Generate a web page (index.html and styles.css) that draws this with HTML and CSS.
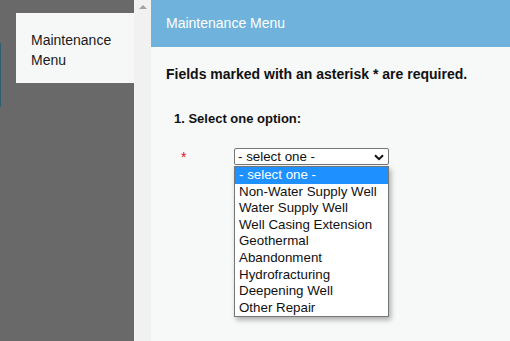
FILE: index.html
```html
<!DOCTYPE html>
<html lang="en">
<head>
    <meta charset="UTF-8">
    <title>Maintenance Menu</title>
    <link rel="stylesheet" href="styles.css">
</head>
<body>
    <div class="page">
        <!-- Left navigation -->
        <div class="sidebar">
            <span class="nav-marker"></span>
            <div class="menu-box">Maintenance<br>Menu</div>
        </div>

        <!-- Scroll strip -->
        <div class="scroll-strip">
            <span class="scroll-up"></span>
        </div>

        <!-- Main panel -->
        <div class="main">
            <div class="main-header">Maintenance Menu</div>
            <div class="main-body">
                <p class="required-note">Fields marked with an asterisk * are required.</p>
                <p class="step-title">1. Select one option:</p>
                <div class="field-row">
                    <span class="asterisk">*</span>
                    <div class="select-wrap">
                        <div class="select-box">
                            <span>- select one -</span>
                            <svg class="chevron" width="10" height="7" viewBox="0 0 10 7">
                                <path d="M1 1.2 L5 5.2 L9 1.2" fill="none" stroke="#111" stroke-width="2"/>
                            </svg>
                        </div>
                        <div class="select-list">
                            <div class="option selected">- select one -</div>
                            <div class="option">Non-Water Supply Well</div>
                            <div class="option">Water Supply Well</div>
                            <div class="option">Well Casing Extension</div>
                            <div class="option">Geothermal</div>
                            <div class="option">Abandonment</div>
                            <div class="option">Hydrofracturing</div>
                            <div class="option">Deepening Well</div>
                            <div class="option">Other Repair</div>
                        </div>
                    </div>
                </div>
            </div>
        </div>
    </div>
</body>
</html>
```
FILE: styles.css
```css
/* Page styles */
body {
    font-family: "Liberation Sans", Arial, sans-serif;
    font-size: 14px;
    color: #111;
    margin: 0;
    padding: 0;
}

.page {
    display: flex;
    height: 341px;
    overflow: hidden;
}

.sidebar {
    position: relative;
    width: 134px;
    flex-shrink: 0;
    background: #696969;
    padding-top: 13px;
}

.nav-marker {
    position: absolute;
    left: 0;
    top: 43px;
    width: 1px;
    height: 64px;
    background: #2f5e73;
}

.menu-box {
    margin-left: 16px;
    height: 70px;
    box-sizing: border-box;
    padding: 17px 0 0 15px;
    background: #f6f8f8;
    line-height: 20px;
    color: #1a1a1a;
}

.scroll-strip {
    width: 17px;
    flex-shrink: 0;
    background: #f1f1f1;
    display: flex;
    justify-content: center;
    padding-top: 5px;
    box-sizing: border-box;
}

.scroll-up {
    width: 0;
    height: 0;
    border-left: 4px solid transparent;
    border-right: 4px solid transparent;
    border-bottom: 4px solid #a3a3a3;
}

.main {
    flex: 1;
    background: #f7f8f8;
}

.main-header {
    background: #6fb3dc;
    color: #fff;
    height: 47px;
    box-sizing: border-box;
    padding: 15px 15px 0 15px;
    line-height: 17px;
}

.main-body {
    padding: 0 15px;
}

.required-note {
    font-weight: bold;
    margin: 19px 0 0 0;
    line-height: 17px;
}

.step-title {
    font-weight: bold;
    font-size: 13px;
    margin: 27px 0 0 8px;
    line-height: 17px;
}

.field-row {
    display: flex;
    margin-top: 21px;
}

.asterisk {
    color: #e0102a;
    width: 68px;
    flex-shrink: 0;
    box-sizing: border-box;
    padding-left: 15px;
    padding-top: 2px;
    line-height: 14px;
}

.select-wrap {
    position: relative;
    width: 155px;
    font-size: 13.33px;
}

.select-box {
    display: flex;
    justify-content: space-between;
    align-items: center;
    height: 17px;
    box-sizing: border-box;
    border: 1px solid #767676;
    border-radius: 2px;
    background: #fff;
    padding: 0 4px 0 3px;
    line-height: 15px;
}

.chevron {
    margin-top: 1px;
}

.select-list {
    position: absolute;
    top: 18px;
    left: 0;
    width: 155px;
    box-sizing: border-box;
    border: 1px solid #767676;
    background: #fff;
    box-shadow: 2px 3px 5px rgba(0, 0, 0, 0.3);
}

.option {
    padding-left: 4px;
    height: 16.6px;
    line-height: 16.6px;
    white-space: nowrap;
}

.option.selected {
    background: #1e90ff;
    color: #fff;
}
```
